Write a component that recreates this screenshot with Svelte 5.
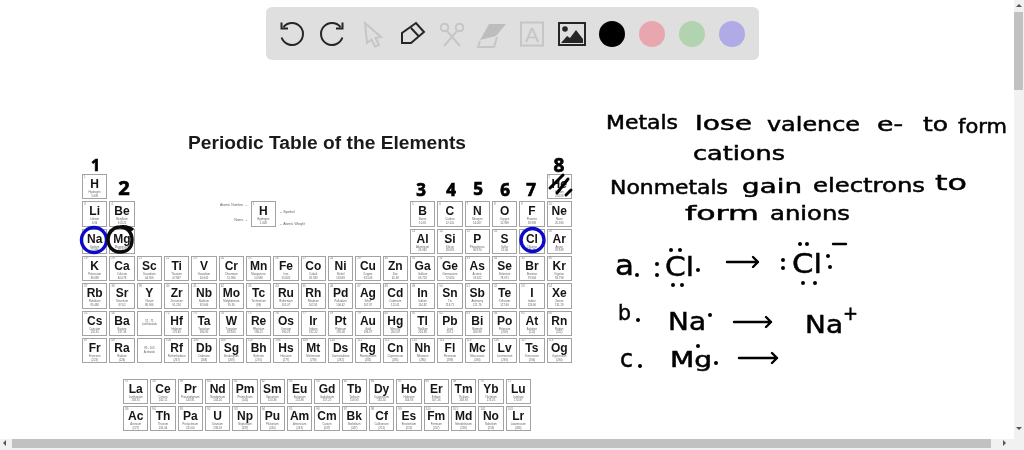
<script lang="ts">
  const raw = `H|Hydrogen|1.008,He|Helium|4.0026,Li|Lithium|6.94,Be|Beryllium|9.0122,B|Boron|10.81,C|Carbon|12.011,N|Nitrogen|14.007,O|Oxygen|15.999,F|Fluorine|18.998,Ne|Neon|20.180,Na|Sodium|22.990,Mg|Magnesium|24.305,Al|Aluminium|26.982,Si|Silicon|28.085,P|Phosphorus|30.974,S|Sulfur|32.06,Cl|Chlorine|35.45,Ar|Argon|39.948,K|Potassium|39.098,Ca|Calcium|40.078,Sc|Scandium|44.956,Ti|Titanium|47.867,V|Vanadium|50.942,Cr|Chromium|51.996,Mn|Manganese|54.938,Fe|Iron|55.845,Co|Cobalt|58.933,Ni|Nickel|58.693,Cu|Copper|63.546,Zn|Zinc|65.38,Ga|Gallium|69.723,Ge|Germanium|72.630,As|Arsenic|74.922,Se|Selenium|78.971,Br|Bromine|79.904,Kr|Krypton|83.798,Rb|Rubidium|85.468,Sr|Strontium|87.62,Y|Yttrium|88.906,Zr|Zirconium|91.224,Nb|Niobium|92.906,Mo|Molybdenum|95.95,Tc|Technetium|(98),Ru|Ruthenium|101.07,Rh|Rhodium|102.91,Pd|Palladium|106.42,Ag|Silver|107.87,Cd|Cadmium|112.41,In|Indium|114.82,Sn|Tin|118.71,Sb|Antimony|121.76,Te|Tellurium|127.60,I|Iodine|126.90,Xe|Xenon|131.29,Cs|Caesium|132.91,Ba|Barium|137.33,La|Lanthanum|138.91,Ce|Cerium|140.12,Pr|Praseodymium|140.91,Nd|Neodymium|144.24,Pm|Promethium|(145),Sm|Samarium|150.36,Eu|Europium|151.96,Gd|Gadolinium|157.25,Tb|Terbium|158.93,Dy|Dysprosium|162.50,Ho|Holmium|164.93,Er|Erbium|167.26,Tm|Thulium|168.93,Yb|Ytterbium|173.05,Lu|Lutetium|174.97,Hf|Hafnium|178.49,Ta|Tantalum|180.95,W|Tungsten|183.84,Re|Rhenium|186.21,Os|Osmium|190.23,Ir|Iridium|192.22,Pt|Platinum|195.08,Au|Gold|196.97,Hg|Mercury|200.59,Tl|Thallium|204.38,Pb|Lead|207.2,Bi|Bismuth|208.98,Po|Polonium|(209),At|Astatine|(210),Rn|Radon|(222),Fr|Francium|(223),Ra|Radium|(226),Ac|Actinium|(227),Th|Thorium|232.04,Pa|Protactinium|231.04,U|Uranium|238.03,Np|Neptunium|(237),Pu|Plutonium|(244),Am|Americium|(243),Cm|Curium|(247),Bk|Berkelium|(247),Cf|Californium|(251),Es|Einsteinium|(252),Fm|Fermium|(257),Md|Mendelevium|(258),No|Nobelium|(259),Lr|Lawrencium|(266),Rf|Rutherfordium|(267),Db|Dubnium|(268),Sg|Seaborgium|(269),Bh|Bohrium|(270),Hs|Hassium|(277),Mt|Meitnerium|(278),Ds|Darmstadtium|(281),Rg|Roentgenium|(282),Cn|Copernicium|(285),Nh|Nihonium|(286),Fl|Flerovium|(289),Mc|Moscovium|(290),Lv|Livermorium|(293),Ts|Tennessine|(294),Og|Oganesson|(294)`

  const elements = raw.split(",").map((row, i) => {
    const [symbol, name, weight] = row.split("|")
    return { n: i + 1, symbol, name, weight }
  })

  function place(n: number): [number, number] | null {
    if (n === 1) return [1, 1]
    if (n === 2) return [1, 18]
    if (n <= 4) return [2, n - 2]
    if (n <= 10) return [2, n + 8]
    if (n <= 12) return [3, n - 10]
    if (n <= 18) return [3, n]
    if (n <= 36) return [4, n - 18]
    if (n <= 54) return [5, n - 36]
    if (n <= 56) return [6, n - 54]
    if (n <= 71) return null
    if (n <= 86) return [6, n - 68]
    if (n <= 88) return [7, n - 86]
    if (n <= 103) return null
    return [7, n - 100]
  }

  const main = elements.filter((e) => place(e.n))
  const lanthanides = elements.filter((e) => e.n >= 57 && e.n <= 71)
  const actinides = elements.filter((e) => e.n >= 89 && e.n <= 103)

  // handwritten words: left edge, baseline, width, size
  const notes = [
    { t: "Metals", x: 606, y: 129, w: 72, s: 19 },
    { t: "lose", x: 695, y: 130, w: 57, s: 20 },
    { t: "valence", x: 767, y: 131, w: 93, s: 19 },
    { t: "e-", x: 877, y: 131, w: 26, s: 19 },
    { t: "to", x: 923, y: 131, w: 25, s: 19 },
    { t: "form", x: 958, y: 133, w: 49, s: 19 },
    { t: "cations", x: 693, y: 160, w: 92, s: 19 },
    { t: "Nonmetals", x: 610, y: 194, w: 118, s: 19 },
    { t: "gain", x: 742, y: 193, w: 60, s: 19 },
    { t: "electrons", x: 813, y: 192, w: 112, s: 19 },
    { t: "to", x: 935, y: 190, w: 32, s: 21 },
    { t: "form", x: 685, y: 220, w: 74, s: 19 },
    { t: "anions", x: 770, y: 220, w: 80, s: 19 },
    { t: "a", x: 615, y: 275, w: 19, s: 28 },
    { t: "Cl", x: 665, y: 276, w: 29, s: 27 },
    { t: "Cl", x: 792, y: 273, w: 30, s: 27 },
    { t: "b", x: 618, y: 320, w: 13, s: 22 },
    { t: "Na", x: 668, y: 330, w: 38, s: 25 },
    { t: "Na", x: 805, y: 333, w: 38, s: 25 },
    { t: "+", x: 843, y: 320, w: 15, s: 20 },
    { t: "c", x: 620, y: 367, w: 13, s: 24 },
    { t: "Mg", x: 670, y: 367, w: 42, s: 21 },
  ]

  // groups scribbled above the table
  const groups = [
    { t: "1", x: 95.5, y: 171, s: 16 },
    { t: "2", x: 124, y: 195, s: 20 },
    { t: "3", x: 421, y: 196, s: 17 },
    { t: "4", x: 451, y: 196, s: 17 },
    { t: "5", x: 478, y: 195, s: 17 },
    { t: "6", x: 505, y: 196, s: 17 },
    { t: "7", x: 531, y: 196, s: 17 },
    { t: "8", x: 559, y: 172, s: 19 },
  ]

  const dots = [
    [637, 275], [657, 264], [657, 275], [671, 250], [680, 250], [673, 285], [682, 285], [698, 270],
    [783, 260], [783, 268], [800, 244], [807, 244], [803, 283], [815, 283], [828, 256], [830, 267],
    [638, 320], [710, 315], [640, 366], [698, 346], [716, 363],
  ]

  const arrows = [
    { x1: 727, x2: 758, y: 262 },
    { x1: 734, x2: 771, y: 322 },
    { x1: 739, x2: 777, y: 358 },
  ]

  const swatches = ["#000000", "#e8a7af", "#b1d3af", "#b0aae6"]
</script>

{#snippet cell(e)}
  <span class="num">{e.n}</span>
  <span class="sym">{e.symbol}</span>
  <span class="name">{e.name}</span>
  <span class="name">{e.weight}</span>
{/snippet}

<div class="page">
  <main class="board">
    <section class="sheet">
      <h1>Periodic Table of the Elements</h1>
      <div class="grid">
        {#each main as e (e.n)}
          <div class="cell" style="grid-row: {place(e.n)[0]}; grid-column: {place(e.n)[1]}">
            {@render cell(e)}
          </div>
        {/each}
        <div class="cell blank" style="grid-row: 6; grid-column: 3">
          <span class="name">57 - 71</span>
          <span class="name">Lanthanoids</span>
        </div>
        <div class="cell blank" style="grid-row: 7; grid-column: 3">
          <span class="name">89 - 103</span>
          <span class="name">Actinoids</span>
        </div>
        <div class="legend">
          <div class="labels left">
            <span>Atomic Number →</span>
            <span>Name →</span>
          </div>
          <div class="cell">
            <span class="num">1</span>
            <span class="sym">H</span>
            <span class="name">Hydrogen</span>
            <span class="name">1.008</span>
          </div>
          <div class="labels right">
            <span>← Symbol</span>
            <span>← Atomic Weight</span>
          </div>
        </div>
      </div>
      <div class="grid fblock">
        {#each lanthanides as e (e.n)}
          <div class="cell">{@render cell(e)}</div>
        {/each}
        {#each actinides as e (e.n)}
          <div class="cell">{@render cell(e)}</div>
        {/each}
      </div>
    </section>
  </main>

  <div class="vbar">
    <span class="arrow up"></span>
    <span class="thumb"></span>
    <span class="arrow down"></span>
  </div>
  <div class="hbar">
    <span class="arrow back"></span>
    <span class="thumb"></span>
    <span class="arrow fwd"></span>
  </div>
  <div class="corner"></div>

  <svg class="ink" width="1024" height="450" viewBox="0 0 1024 450">
    <circle cx="94" cy="240" r="12.500" class="ring blue" />
    <path d="M120 227c-7 0-12 6-12 12 0 8 5 13 12 13 8 0 12-5 12-12 0-8-5-13-12-13 5-1 9 0 13 3" class="ring dark" />
    <circle cx="532.500" cy="240" r="11.500" class="ring blue" />
    <path d="M550 188l13-13M557 193l11-14M566 195l5-5" class="strike" />
    {#each groups as g}
      <text x={g.x} y={g.y} font-size={g.s} text-anchor="middle" class="digit">{g.t}</text>
    {/each}
    {#each notes as w}
      <text x={w.x} y={w.y} font-size={w.s} textLength={w.w} lengthAdjust="spacingAndGlyphs" class="hand">{w.t}</text>
    {/each}
    {#each dots as d}
      <circle cx={d[0]} cy={d[1]} r="2" />
    {/each}
    <path d="M833 244h13" class="pen" />
    {#each arrows as a}
      <path d="M{a.x1} {a.y}H{a.x2}M{a.x2 - 5} {a.y - 5}L{a.x2} {a.y}L{a.x2 - 5} {a.y + 5}" class="pen" />
    {/each}
  </svg>

  <nav class="toolbar">
    <button type="button" aria-label="Undo">
      <svg width="28" height="28" viewBox="0 0 28 28" class="on">
        <path d="M5.500 7A11 11 0 1 1 3.600 17.500M3.500 2.500V8.500H10" />
      </svg>
    </button>
    <button type="button" aria-label="Redo">
      <svg width="28" height="28" viewBox="0 0 28 28" class="on">
        <path d="M22.500 7A11 11 0 1 0 24.400 17.500M24.500 2.500V8.500H18" />
      </svg>
    </button>
    <button type="button" aria-label="Select">
      <svg width="28" height="28" viewBox="0 0 28 28" class="off">
        <path d="M7 3L23 17L17.500 18L21 25L17 26.500L13.500 19.500L9 23Z" />
      </svg>
    </button>
    <button type="button" aria-label="Pen">
      <svg width="28" height="28" viewBox="0 0 28 28" class="on">
        <path d="M4 23V13L18 3L26 12L13 23ZM13 8L21 16.500" />
      </svg>
    </button>
    <button type="button" aria-label="Tools">
      <svg width="28" height="28" viewBox="0 0 28 28" class="off">
        <path d="M6 26L19 11M22 26L9 11" />
        <circle cx="6.500" cy="7.500" r="3.800" />
        <circle cx="21.500" cy="7.500" r="3.800" />
      </svg>
    </button>
    <button type="button" aria-label="Eraser">
      <svg width="30" height="28" viewBox="0 0 30 28" class="off">
        <path d="M12 4H29L19 16L3 20Z" class="rub" />
        <path d="M3 21L1 27H17L20 17" />
      </svg>
    </button>
    <button type="button" aria-label="Text">
      <svg width="28" height="28" viewBox="0 0 28 28" class="off">
        <rect x="3" y="2.500" width="22" height="23" />
        <text x="14" y="21.500" text-anchor="middle" class="letter">A</text>
      </svg>
    </button>
    <button type="button" aria-label="Image">
      <svg width="30" height="28" viewBox="0 0 30 28" class="on">
        <rect x="2" y="3" width="26" height="22" />
        <circle cx="8" cy="9" r="2.800" class="fill" />
        <path d="M4 23L10 16L13 18L19 10L26 19V23Z" class="fill" />
      </svg>
    </button>
    {#each swatches as color}
      <button type="button" aria-label="Colour {color}">
        <span class="swatch" style="background: {color}"></span>
      </button>
    {/each}
  </nav>
</div>

<style>
  :global(body) {
    margin: 0;
    background: #fff;
    overflow: hidden;
  }

  .page {
    position: relative;
    display: grid;
    grid-template-columns: 1014px 10px;
    grid-template-rows: 439px 11px;
    width: 1024px;
    height: 450px;
    overflow: hidden;
    font-family: "Liberation Sans", Arial, sans-serif;
  }

  .board {
    overflow: hidden;
    background: #fff;
  }

  .sheet {
    width: 490px;
    margin-left: 82px;
    padding-top: 132px;
    filter: blur(0.4px);
  }

  h1 {
    margin: 0 0 20px;
    font-size: 19.2px;
    line-height: 22px;
    font-weight: 700;
    text-align: center;
    color: #1a1a1a;
  }

  .grid {
    display: grid;
    grid-template-columns: repeat(18, 25.33px);
    grid-auto-rows: 25.33px;
    gap: 2px;
  }

  .fblock {
    grid-template-columns: repeat(15, 25.33px);
    margin: 15.5px 0 0 41px;
  }

  .cell {
    position: relative;
    box-sizing: border-box;
    display: flex;
    flex-direction: column;
    align-items: center;
    width: 25.33px;
    height: 25.33px;
    padding-top: 2px;
    border: 1px solid #a3a3a3;
    overflow: hidden;
    background: #fff;
  }

  .blank {
    justify-content: center;
    padding-top: 0;
  }

  .num {
    position: absolute;
    top: 0.5px;
    left: 1px;
    font-size: 3px;
    line-height: 3.5px;
    color: #777;
  }

  .sym {
    font-size: 12px;
    line-height: 14px;
    font-weight: 700;
    color: #151515;
  }

  .name {
    font-size: 2.8px;
    line-height: 3.6px;
    color: #666;
    white-space: nowrap;
  }

  .legend {
    grid-row: 2;
    grid-column: 3 / 13;
    display: flex;
    align-items: center;
    gap: 3px;
    padding-left: 79px;
  }

  .labels {
    display: flex;
    flex-direction: column;
    width: 32px;
    font-size: 3.4px;
    color: #666;
    white-space: nowrap;
  }

  .labels.left {
    gap: 11px;
    margin-top: -3px;
    text-align: right;
  }

  .labels.right {
    gap: 8px;
    margin-top: 9px;
  }

  .vbar,
  .hbar,
  .corner {
    position: relative;
    background: #f1f1f1;
  }

  .vbar {
    padding-top: 12px;
  }

  .vbar .thumb {
    display: block;
    width: 9px;
    height: 78px;
    background: #c1c1c1;
  }

  .hbar {
    padding-left: 12px;
  }

  .hbar .thumb {
    display: block;
    width: 979px;
    height: 9px;
    background: #c1c1c1;
  }

  .arrow {
    position: absolute;
    width: 0;
    height: 0;
    border: 3px solid transparent;
  }

  .up {
    top: 1px;
    left: 2px;
    border-bottom-color: #555;
  }

  .down {
    top: 427px;
    left: 2px;
    border-top-color: #555;
  }

  .back {
    top: 1px;
    left: 0;
    border-right-color: #555;
  }

  .fwd {
    top: 1px;
    left: 1003px;
    border-left-color: #555;
  }

  .ink {
    position: absolute;
    top: 0;
    left: 0;
    pointer-events: none;
    filter: blur(0.3px);
  }

  .hand {
    font-family: "DejaVu Sans", sans-serif;
    fill: #000;
    stroke: #000;
    stroke-width: 0.5px;
  }

  .digit {
    font-family: "Open Sans", sans-serif;
    font-weight: 700;
    fill: #000;
    stroke: #000;
    stroke-width: 0.7px;
  }

  .ring {
    fill: none;
    stroke-width: 3.4px;
  }

  .blue {
    stroke: #0a0ac8;
  }

  .dark {
    stroke: #0b0b0b;
  }

  .strike,
  .pen {
    fill: none;
    stroke: #000;
    stroke-linecap: round;
    stroke-linejoin: round;
  }

  .strike {
    stroke-width: 3px;
  }

  .pen {
    stroke-width: 2.4px;
  }

  .toolbar {
    position: absolute;
    top: 7px;
    left: 266px;
    box-sizing: border-box;
    display: flex;
    align-items: center;
    width: 493px;
    height: 53px;
    padding: 0 7px 0 6px;
    border-radius: 6px;
    background: #dfdfdf;
  }

  button {
    display: flex;
    align-items: center;
    justify-content: center;
    width: 40px;
    height: 40px;
    padding: 0;
    border: 0;
    background: none;
  }

  .toolbar svg {
    fill: none;
    stroke-width: 2px;
  }

  .on {
    stroke: #262626;
  }

  .off {
    stroke: #c6c6c6;
  }

  .fill {
    fill: #262626;
    stroke: none;
  }

  .rub {
    fill: #bdbdbd;
    stroke: none;
  }

  .letter {
    font-family: "Liberation Sans", sans-serif;
    font-size: 21px;
    fill: #c6c6c6;
    stroke: none;
  }

  .swatch {
    display: block;
    width: 26px;
    height: 26px;
    border-radius: 50%;
  }
</style>
